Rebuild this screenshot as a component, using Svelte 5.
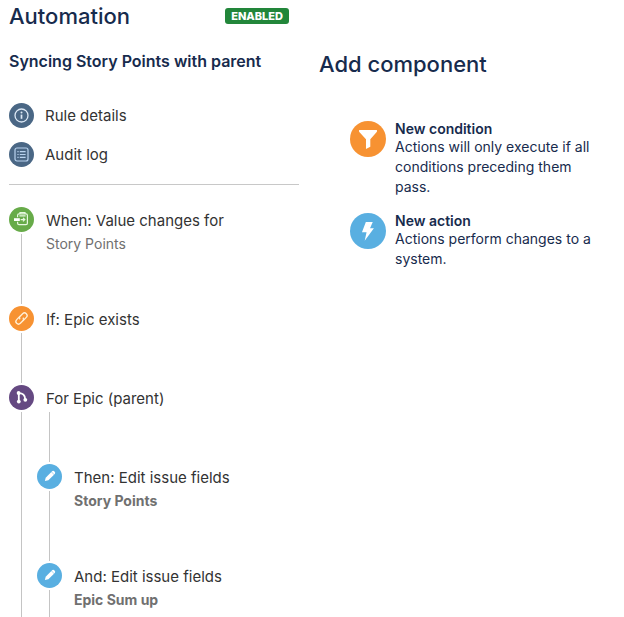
<script lang="ts">
  type Step = {
    title: string,
    detail?: string,
    strong?: boolean,
    icon: string,
    color: string,
    steps?: Step[]
  };

  const links = [
    { label: "Rule details", icon: "info" },
    { label: "Audit log", icon: "log" }
  ];

  const steps: Step[] = [
    { title: "When: Value changes for", detail: "Story Points", icon: "field", color: "green" },
    { title: "If: Epic exists", icon: "link", color: "orange" },
    {
      title: "For Epic (parent)",
      icon: "branch",
      color: "purple",
      steps: [
        { title: "Then: Edit issue fields", detail: "Story Points", strong: true, icon: "pencil", color: "blue" },
        { title: "And: Edit issue fields", detail: "Epic Sum up", strong: true, icon: "pencil", color: "blue" }
      ]
    }
  ];

  const components = [
    {
      title: "New condition",
      text: "Actions will only execute if all conditions preceding them pass.",
      icon: "funnel",
      color: "orange"
    },
    {
      title: "New action",
      text: "Actions perform changes to a system.",
      icon: "bolt",
      color: "blue"
    }
  ];
</script>

{#snippet glyph(name: string)}
  <svg viewBox="0 0 25 25" aria-hidden="true">
    {#if name === "info"}
      <g fill="none" stroke="#dce8f5">
        <circle cx="12.5" cy="12.5" r="6.5" stroke-width="1.3" />
        <path d="M12.5 11.6v4.2" stroke-width="1.7" />
      </g>
      <circle cx="12.5" cy="9.4" r="1" fill="#dce8f5" />
    {:else if name === "log"}
      <g fill="none" stroke="#b9d3ef" stroke-width="1.2">
        <rect x="6" y="6" width="13" height="13" rx="2" />
        <path d="M8.4 9.7h1.2M8.4 12.5h1.2M8.4 15.3h1.2M10.8 9.7h5.8M10.8 12.5h5.8M10.8 15.3h5.8" />
      </g>
    {:else if name === "field"}
      <g fill="none" stroke="#e6f8df" stroke-width="1.2">
        <path d="M8.6 10.2V8.2q0-1.4 1.4-1.4h7q1.4 0 1.4 1.4v8q0 1.4-1.4 1.4h-7q-1.4 0-1.4-1.4v-1.4" />
        <path d="M11 7V5.6h5V7M10.4 8.8h6.2" />
        <path d="M11.6 12.6h4.2M14 10.8l1.8 1.8-1.8 1.8" />
      </g>
      <path d="M5 11.2h5.8v2.8H5z" fill="#fff" />
    {:else if name === "link"}
      <g fill="none" stroke="#fff0d8" stroke-width="1.3" transform="rotate(-45 12.5 12.5)">
        <path d="M13 9.9H8.3a2.6 2.6 0 0 0 0 5.2h3.5a2.6 2.6 0 0 0 2.4-2.2" />
        <path d="M12 15.1h4.7a2.6 2.6 0 0 0 0-5.2h-3.5a2.6 2.6 0 0 0-2.4 2.2" />
      </g>
    {:else if name === "branch"}
      <g fill="none" stroke="#fff" stroke-width="1.8">
        <path d="M9.8 8.5v7.5M9.8 8.2c3.6 0 6.2 1.8 6.4 6" />
      </g>
      <g fill="#fff">
        <circle cx="9.6" cy="8" r="1.9" />
        <circle cx="9.8" cy="16.6" r="1.9" />
        <circle cx="16.3" cy="14.8" r="1.9" />
      </g>
    {:else if name === "pencil"}
      <g fill="#fff" transform="rotate(45 12.5 12.5)">
        <path d="M10.6 7q0-1.6 1.9-1.6T14.4 7v.7h-3.8z" />
        <path d="M10.6 8h3.8v8l-1.9 3-1.9-3z" />
      </g>
    {:else if name === "funnel"}
      <path d="M6.3 6.2h12.4v1.2l-4.6 5.3v5.1l-3 1.6v-6.7L6.3 7.4z" fill="#fff" />
    {:else if name === "bolt"}
      <path d="M11 6.2h4.8l-1.9 4.4h2.7l-6.4 8.6 1.3-5.8H8.3z" fill="#fff" />
    {/if}
  </svg>
{/snippet}

{#snippet stepList(items: Step[])}
  <ol class="steps">
    {#each items as step}
      <li class:tall={step.detail}>
        <span class="rail">
          <span class="icon {step.color}">{@render glyph(step.icon)}</span>
        </span>
        <div class="body">
          <button type="button">
            <span class="title">{step.title}</span>
            {#if step.detail}
              <span class="detail" class:strong={step.strong}>{step.detail}</span>
            {/if}
          </button>
          {#if step.steps}
            <div class="branch">
              {@render stepList(step.steps)}
            </div>
          {/if}
        </div>
      </li>
    {/each}
  </ol>
{/snippet}

<main>
  <section class="rule">
    <header>
      <h1>Automation</h1>
      <span class="badge">Enabled</span>
    </header>
    <h2>Syncing Story Points with parent</h2>

    <nav>
      {#each links as link}
        <a href="#{link.icon}">
          <span class="icon slate">{@render glyph(link.icon)}</span>
          {link.label}
        </a>
      {/each}
    </nav>

    {@render stepList(steps)}
  </section>

  <section class="add">
    <h1>Add component</h1>
    {#each components as component}
      <button type="button" class="component">
        <span class="icon large {component.color}">{@render glyph(component.icon)}</span>
        <span>
          <strong>{component.title}</strong>
          <span class="text">{component.text}</span>
        </span>
      </button>
    {/each}
  </section>
</main>

<style>
  :global(body) {
    background: #fff;
    font-family: Inter, "Liberation Sans", sans-serif;
  }

  main {
    display: grid;
    grid-template-columns: minmax(0, 290px) minmax(0, 1fr);
    gap: 20px;
    padding: 0 24px 0 9px;
    color: #172b4d;
  }

  h1 {
    margin: 0;
    font-size: 22px;
    font-weight: 500;
    line-height: 32px;
  }

  h2 {
    margin: 18px 0 0;
    font-size: 16px;
    font-weight: 600;
    line-height: 22px;
  }

  button {
    display: block;
    padding: 0;
    border: 0;
    background: none;
    color: inherit;
    font: inherit;
    text-align: left;
    cursor: pointer;
  }

  header {
    display: flex;
    align-items: center;
    justify-content: space-between;
    padding-right: 10px;
  }

  .badge {
    padding: 0 6px;
    border-radius: 3px;
    background: #22863a;
    color: #fff;
    font-size: 11px;
    font-weight: 800;
    line-height: 16px;
    text-transform: uppercase;
  }

  nav {
    display: flex;
    flex-direction: column;
    gap: 14px;
    margin-bottom: 22px;
    padding: 31px 0 17px;
    border-bottom: 1px solid #c8c8c8;
  }

  nav a {
    display: flex;
    align-items: center;
    gap: 11px;
    color: #333;
    font-size: 15px;
    line-height: 25px;
    text-decoration: none;
  }

  .icon {
    display: block;
    flex: none;
    width: 25px;
    height: 25px;
    border-radius: 50%;
  }

  .icon.large {
    width: 36px;
    height: 36px;
  }

  svg {
    display: block;
    width: 100%;
    height: 100%;
  }

  .slate { background: #4a6785; }
  .green { background: #67ab49; }
  .orange { background: #f79232; }
  .purple { background: #654982; }
  .blue { background: #59afe1; }

  .steps {
    margin: 0;
    padding: 0;
    list-style: none;
  }

  .steps li {
    display: flex;
    gap: 12px;
    min-height: 79px;
  }

  .steps li.tall {
    min-height: 99px;
  }

  .rail {
    display: flex;
    flex: none;
    flex-direction: column;
    align-items: center;
    gap: 2px;
    width: 25px;
  }

  .rail::after {
    content: "";
    flex: 1;
    width: 1px;
    margin-bottom: 2px;
    background: #c4c4c4;
  }

  .body {
    flex: 1;
    min-width: 0;
  }

  .title,
  .detail {
    display: block;
  }

  .title {
    color: #333;
    font-size: 15px;
    line-height: 27px;
  }

  .detail {
    color: #707070;
    font-size: 14px;
    line-height: 20px;
  }

  .strong {
    font-weight: 700;
  }

  /* nested steps hang one rail to the left of the parent's text */
  .branch {
    margin-left: -9px;
  }

  .branch::before {
    content: "";
    display: block;
    width: 1px;
    height: 50px;
    margin: 0 0 2px 12px;
    background: #c4c4c4;
  }

  .branch .steps li:last-child {
    min-height: 54px;
  }

  .branch .steps li:last-child .rail::after,
  li:has(.branch) > .rail::after {
    margin-bottom: 0;
  }

  .add {
    padding-top: 48px;
  }

  .add h1 {
    margin-bottom: 41px;
  }

  .component {
    display: flex;
    gap: 9px;
    margin: 0 0 16px 31px;
    font-size: 14px;
  }

  .component strong {
    display: block;
    font-weight: 600;
    line-height: 16px;
  }

  .component .text {
    display: block;
    line-height: 20px;
  }
</style>
